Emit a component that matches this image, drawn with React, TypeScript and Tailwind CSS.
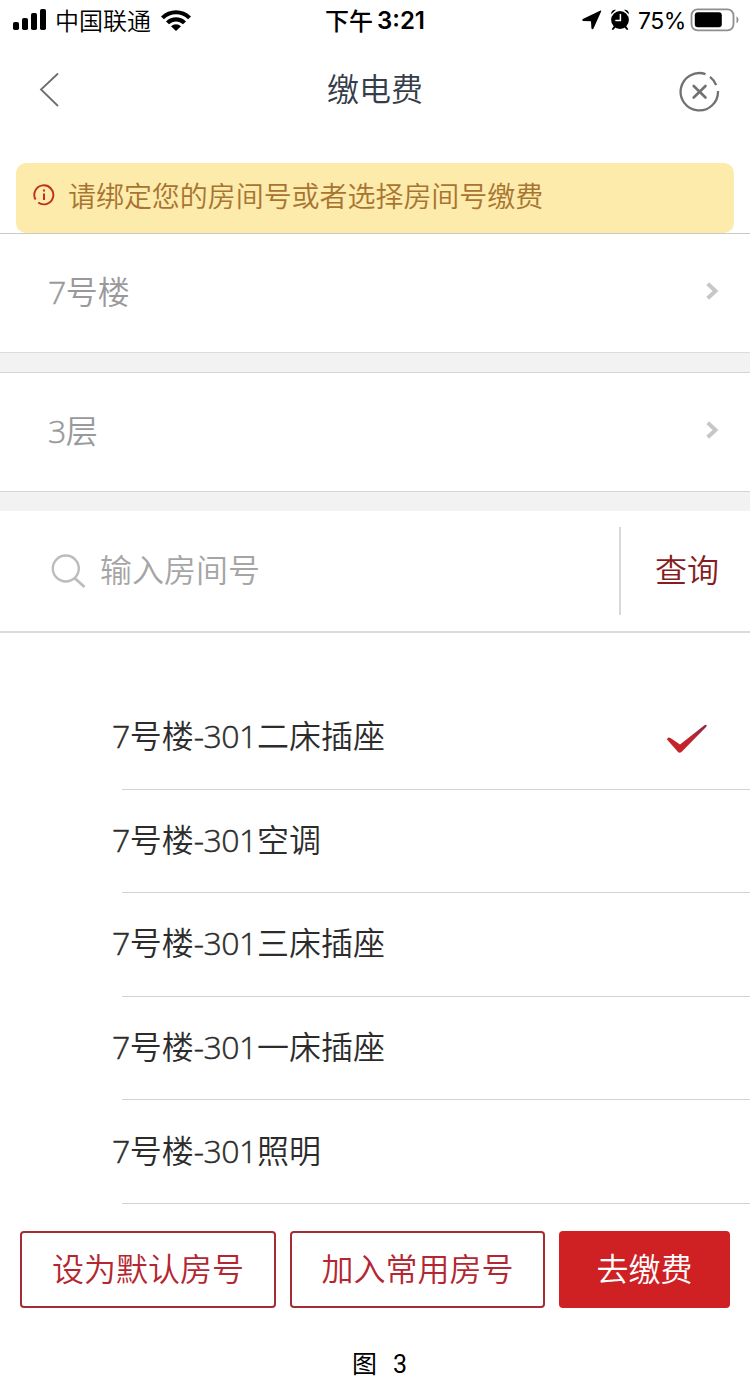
import React from "react";

const rooms = ["二床插座", "空调", "三床插座", "一床插座", "照明"];

function Latin({ children }: { children: React.ReactNode }) {
  return (
    <span className="font-['Open_Sans'] font-light tracking-[-0.5px] [-webkit-text-stroke:0.45px_currentColor]">
      {children}
    </span>
  );
}

function StatusBar() {
  return (
    <div className="flex h-10 shrink-0 items-center text-[24px] leading-10 text-black">
      <div className="flex w-[250px] items-center pl-[13px]">
        <svg width="34" height="22" viewBox="0 0 34 22" className="shrink-0">
          <rect x="0" y="13" width="6" height="8" rx="1.8" />
          <rect x="9" y="9" width="6" height="12" rx="1.8" />
          <rect x="18" y="4" width="6" height="17" rx="1.8" />
          <rect x="27" y="0" width="6" height="21" rx="1.8" />
        </svg>
        <span className="ml-[8px] font-[350] whitespace-nowrap">中国联通</span>
        <svg width="30" height="21" viewBox="0 0 30 21" className="ml-[10px] shrink-0">
          <path d="M0 6.4C8-1.8 22-1.8 30 6.4L27.1 9.2C20.4 2.6 9.6 2.6 2.9 9.2Z" />
          <path d="M5 11.4C10.6 5.8 19.4 5.8 25 11.4L22 14.3C18.1 10.4 11.9 10.4 8 14.3Z" />
          <path d="M10 16.3C12.8 13.6 17.2 13.6 20 16.3L15 21Z" />
        </svg>
      </div>
      <div className="flex w-[250px] items-center justify-center">
        <span className="font-medium">下午</span>
        <span className="mt-[1px] ml-[4px] font-['Inter'] text-[24px] font-semibold">3:21</span>
      </div>
      <div className="flex w-[250px] items-center justify-end pr-[11px]">
        <svg width="20" height="20" viewBox="0 0 20 20" className="mr-[8px]">
          <path d="M18.6 .4Q19.6 .4 19 1.8L11.6 18.2Q10.4 20.4 9.4 18.2L9 11.2L1.2 10.9Q-1 10.2 1.3 8.7Z" />
        </svg>
        <svg width="20" height="22" viewBox="0 0 20 22" className="mr-[8px]">
          <circle cx="10" cy="11" r="8.9" />
          <path d="M1.2 5.2A4 4 0 0 1 6 .8ZM18.8 5.2A4 4 0 0 0 14 .8ZM4 17L1.6 20.3L3 21L6 18ZM16 17L18.4 20.3L17 21L14 18Z" />
          <path d="M10.4 5V11.6H5.3" fill="none" stroke="white" strokeWidth="1.5" />
        </svg>
        <span className="mt-[2px] w-[48px] font-['Inter'] text-[23px] tracking-[-0.5px]">75%</span>
        <svg width="49" height="24" viewBox="0 0 49 24" className="ml-[4px] shrink-0">
          <rect x="1.5" y="1.3" width="42" height="21" rx="6" fill="none" stroke="#8e8e8e" strokeWidth="1.8" />
          <rect x="4.8" y="4.3" width="27" height="15" rx="3" />
          <path d="M46.5 8.3Q48.5 9.5 48.5 11.8T46.5 15.3Z" fill="#8e8e8e" />
        </svg>
      </div>
    </div>
  );
}

function Header() {
  return (
    <header className="flex h-[123px] shrink-0 items-start justify-between pr-[30px] pl-[39px]">
      <svg width="41" height="36" viewBox="0 0 41 36" className="mt-8" fill="none" stroke="#6d6d6d" strokeWidth="1.8">
        <path d="M19 1.5L2 17.5L19 34" />
      </svg>
      <h1 className="mt-[23px] mr-[9px] text-[32px] leading-[48px] font-[350] text-[#343d49]">缴电费</h1>
      <svg width="41" height="42" viewBox="0 0 41 42" className="mt-[31px]" fill="none" stroke="#707173" strokeWidth="2.3">
        <path d="M26.5 3.1A18.7 18.7 0 1 0 39 20" />
        <path d="M31 5.8A18.7 18.7 0 0 1 37.2 14.2" />
        <path d="M14.7 15L26.5 26.5M26.5 15L14.7 26.5" strokeWidth="2.6" strokeLinecap="round" />
      </svg>
    </header>
  );
}

function PickerRow({ digit, label }: { digit: string; label: string }) {
  return (
    <div className="flex h-[119px] items-center justify-between border-b border-[#d4d4d4] pr-[31px] pl-12 text-[32px] leading-[48px] font-[350] text-[#99999b]">
      <span className="-mt-[5px]"><Latin>{digit}</Latin>{label}</span>
      <svg width="13" height="18" viewBox="0 0 13 18" fill="none" stroke="#c7c7c7" strokeWidth="4" className="-mt-1">
        <path d="M1.7 1.8L9.5 9L1.7 16.2" />
      </svg>
    </div>
  );
}

export default function App() {
  return (
    <div className="flex h-[1380px] w-[750px] flex-col overflow-hidden bg-white font-['Noto_Sans_CJK_SC',sans-serif]">
      <StatusBar />
      <Header />
      <div className="mx-4 flex h-[70px] shrink-0 items-center rounded-[10px] bg-[#fcebab] pb-[5px] pl-[17px] text-[28px] leading-10 font-[350] text-[#a87432]">
        <svg width="22" height="22" viewBox="0 0 22 22" fill="none" stroke="#c03020" strokeWidth="1.9" className="-mt-px mr-[13px]">
          <path d="M2.6 15.6A9.5 9.5 0 1 1 5.2 18.5" />
          <path d="M11 9.5V16" strokeWidth="2" />
          <path d="M11 5.5V7.6" strokeWidth="2" />
        </svg>
        <span className="-mt-[2px] tracking-[-0.05px]">请绑定您的房间号或者选择房间号缴费</span>
      </div>
      <div className="h-[119px] shrink-0 border-t border-[#c9c9c9]">
        <PickerRow digit="7" label="号楼" />
      </div>
      <div className="h-[21px] shrink-0 border-b border-[#d4d4d4] bg-[#f2f2f2]">
        <div className="h-px bg-[#dcdcdc]" />
      </div>
      <div className="h-[119px] shrink-0">
        <PickerRow digit="3" label="层" />
      </div>
      <div className="h-[19px] shrink-0 bg-[#f2f2f2]" />
      <div className="flex h-[122px] shrink-0 items-center border-b-2 border-[#dadada] pl-[51px]">
        <svg width="35" height="35" viewBox="0 0 35 35" fill="none" stroke="#bcbcbc" strokeWidth="2.4" className="mt-px">
          <circle cx="14.8" cy="14.5" r="13" />
          <path d="M23 23.5L33.5 33" strokeWidth="2.8" />
        </svg>
        <span className="-mt-[6px] ml-[14px] flex-1 text-[32px] leading-[48px] font-[350] text-[#a5a5a5]">输入房间号</span>
        <div className="h-[88px] w-0.5 bg-[#d9d9d9]" />
        <button className="-mt-[6px] w-[129px] pl-[3px] text-[32px] leading-[48px] font-[350] text-[#851c20]">查询</button>
      </div>
      <ul className="mt-[53px] h-[518px] shrink-0">
        {rooms.map((room, i) => (
          <li key={room} className="relative flex h-[103.6px] items-center justify-between pr-[42px] pl-28 text-[32px] leading-[48px] font-[350] text-[#2c2c2c]">
            <span className="-mt-[5px]"><Latin>7</Latin>号楼<Latin>-301</Latin>{room}</span>
            {i === 0 && (
              <svg width="42" height="32" viewBox="0 0 42 32" className="mt-[2px]">
                <defs>
                  <linearGradient id="tick" x1="0" y1="1" x2="1" y2="0">
                    <stop offset=".5" stopColor="#c4252d" />
                    <stop offset="1" stopColor="#8b2845" />
                  </linearGradient>
                </defs>
                <path d="M1 16.4Q1.5 13.5 4.5 15L14 21.6L38.5 2.2Q41.5 1 40.5 3.5L15.5 29Q13.5 30.5 12 29Z" fill="url(#tick)" />
              </svg>
            )}
            <span className="absolute right-0 bottom-0 left-[122px] h-px bg-[#d2d2d2]" />
          </li>
        ))}
      </ul>
      <div className="mt-[27px] flex h-[77px] shrink-0 gap-[14px] px-5 text-[32px] leading-[48px] font-[350] text-[#b42630]">
        <button className="w-64 rounded-[4px] border-2 border-[#a52c33] pb-[5px]">设为默认房号</button>
        <button className="w-[255px] rounded-[4px] border-2 border-[#a52c33] pb-[5px]">加入常用房号</button>
        <button className="w-[171px] rounded-[4px] bg-[#cf2024] pb-[5px] text-white">去缴费</button>
      </div>
      <p className="mt-[42px] flex h-[30px] shrink-0 items-center pl-[352px] font-['Roboto','Noto_Sans_CJK_SC',sans-serif] text-[25px] leading-[30px] text-black">
        图<span className="ml-[16px]">3</span>
      </p>
    </div>
  );
}
